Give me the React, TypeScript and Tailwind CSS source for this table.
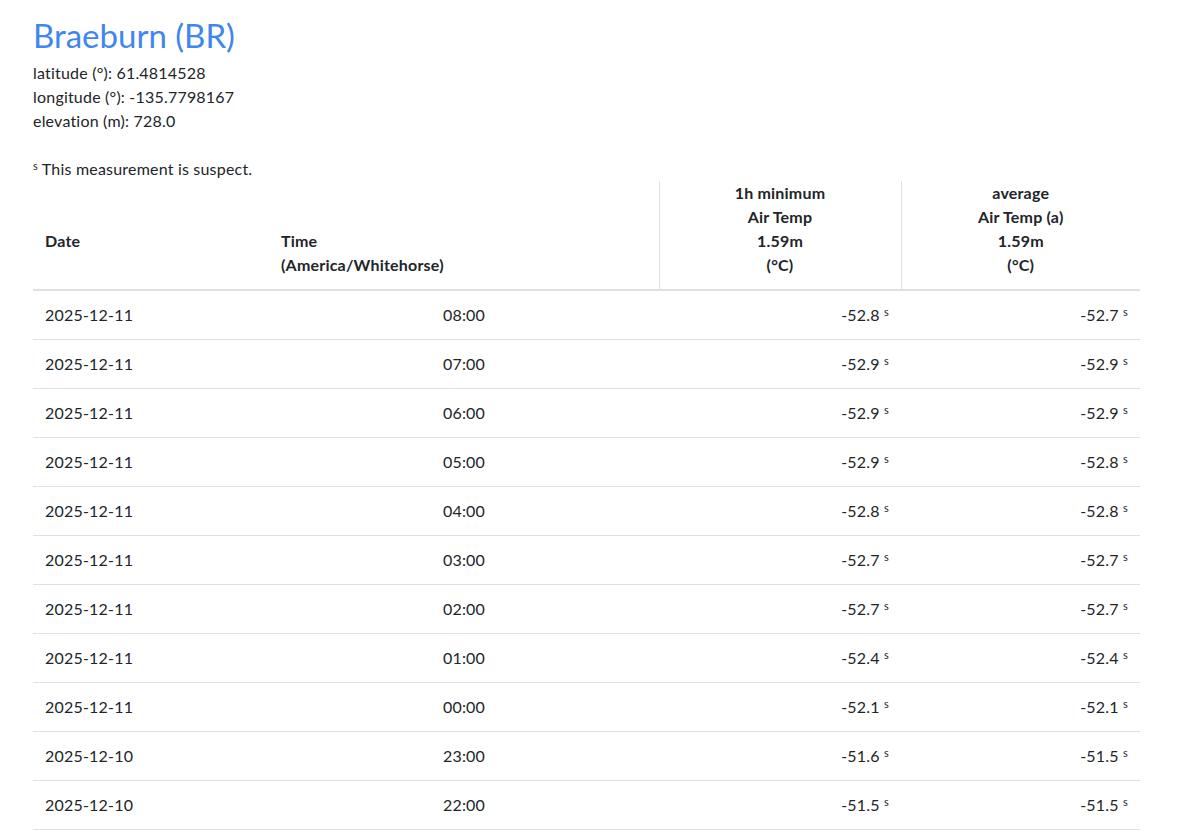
import React from "react";

const rows: [string, string, string, string][] = [
  ["2025-12-11", "08:00", "-52.8", "-52.7"],
  ["2025-12-11", "07:00", "-52.9", "-52.9"],
  ["2025-12-11", "06:00", "-52.9", "-52.9"],
  ["2025-12-11", "05:00", "-52.9", "-52.8"],
  ["2025-12-11", "04:00", "-52.8", "-52.8"],
  ["2025-12-11", "03:00", "-52.7", "-52.7"],
  ["2025-12-11", "02:00", "-52.7", "-52.7"],
  ["2025-12-11", "01:00", "-52.4", "-52.4"],
  ["2025-12-11", "00:00", "-52.1", "-52.1"],
  ["2025-12-10", "23:00", "-51.6", "-51.5"],
  ["2025-12-10", "22:00", "-51.5", "-51.5"],
];

function Sup() {
  return <sup className="text-[11px]">s</sup>;
}

export default function App() {
  return (
    <div
      className="h-[831px] overflow-hidden bg-white text-[#212529] px-[33px] pt-[16px] tracking-[0.2px]"
      style={{ fontFamily: "Lato, 'Open Sans', sans-serif" }}
    >
      <h1 className="text-[33px] leading-[38px] text-[#3f86ef] mb-[7px] tracking-normal">Braeburn (BR)</h1>
      <div className="text-[16px] leading-[24px]">
        <div>latitude (°): 61.4814528</div>
        <div>longitude (°): -135.7798167</div>
        <div>elevation (m): 728.0</div>
      </div>
      <p className="text-[16px] leading-[24px] mt-[24px]">
        <sup className="text-[11px]">s</sup> This measurement is suspect.
      </p>
      <table className="w-[1107px] border-collapse text-[16px] leading-[24px]">
        <thead>
          <tr className="border-b-2 border-[#dee2e6]">
            <th className="w-[236px] text-left font-bold align-bottom px-3 pt-0 pb-3">
              Date
              <br />
              &nbsp;
            </th>
            <th className="w-[390px] text-left font-bold align-bottom px-3 pt-0 pb-3">
              Time
              <br />
              (America/Whitehorse)
            </th>
            <th className="w-[242px] text-center font-bold align-bottom px-3 pt-0 pb-3 border-l border-[#dee2e6]">
              1h minimum
              <br />
              Air Temp
              <br />
              1.59m
              <br />
              (°C)
            </th>
            <th className="text-center font-bold align-bottom px-3 pt-0 pb-3 border-l border-[#dee2e6]">
              average
              <br />
              Air Temp (a)
              <br />
              1.59m
              <br />
              (°C)
            </th>
          </tr>
        </thead>
        <tbody>
          {rows.map((r, i) => (
            <tr key={i} className="border-b border-[#dee2e6]">
              <td className="px-3 py-3">{r[0]}</td>
              <td className="px-3 py-3 text-center">{r[1]}</td>
              <td className="px-3 py-3 text-right">
                {r[2]} <Sup />
              </td>
              <td className="px-3 py-3 text-right">
                {r[3]} <Sup />
              </td>
            </tr>
          ))}
        </tbody>
      </table>
    </div>
  );
}
